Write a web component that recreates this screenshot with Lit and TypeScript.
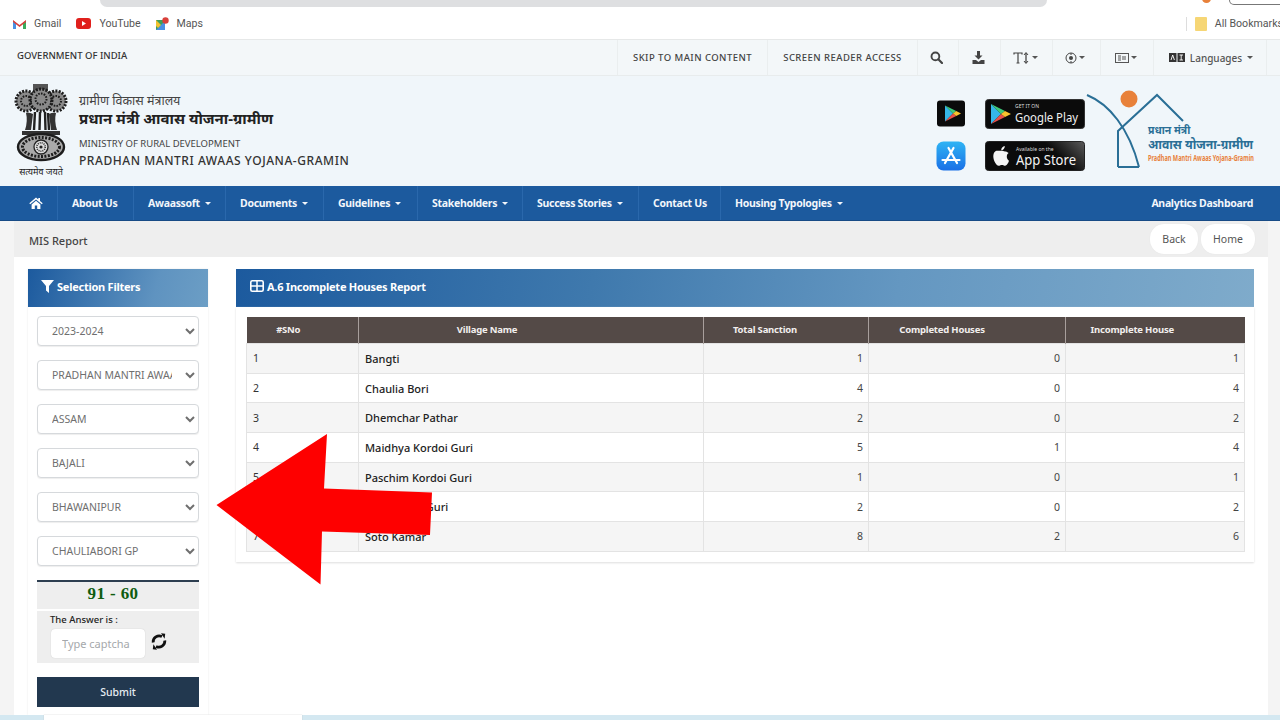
import { LitElement, html, css, svg } from "lit";
import { customElement } from "lit/decorators.js";

const caret = html`<span class="caret"></span>`;

const emblem = svg`<svg width="54" height="82" viewBox="0 0 54 82">
  <path d="M19 1 h15 v7 h-15 z" fill="#555"/>
  <g fill="#8a8a8a" stroke="#1d1d1d" stroke-width="3" stroke-dasharray="2 1.3">
    <circle cx="12" cy="18" r="10"/>
    <circle cx="42" cy="18" r="10"/>
    <ellipse cx="27" cy="17" rx="11" ry="11"/>
  </g>
  <g fill="none" stroke="#1d1d1d" stroke-dasharray="1.6 1.2" stroke-width="2">
    <circle cx="12" cy="18" r="5"/><circle cx="42" cy="18" r="5"/><circle cx="27" cy="16" r="5.5"/>
  </g>
  <path d="M12 30 Q15 29 19 31 L17 47 H11 Q14 38 12 30 Z M42 30 Q39 29 35 31 L37 47 H43 Q40 38 42 30 Z" fill="#333"/>
  <path d="M21 29 L20 47 M26 29 L25.5 47 M31 29 L31.5 47 M34 30 L35 47" stroke="#222" stroke-width="2.4" fill="none"/>
  <path d="M8 48 H46 V52 H8 Z" fill="#333"/>
  <ellipse cx="27" cy="64" rx="23" ry="13" fill="#aaa" stroke="#1d1d1d" stroke-width="2.4"/>
  <ellipse cx="27" cy="64" rx="18.5" ry="9.5" fill="none" stroke="#1d1d1d" stroke-width="3" stroke-dasharray="2 1.4"/>
  <circle cx="27" cy="64" r="7" fill="#ddd" stroke="#222" stroke-width="1.3"/>
  <circle cx="27" cy="64" r="4.2" fill="none" stroke="#333" stroke-width="1.6" stroke-dasharray="1 1"/>
  <circle cx="27" cy="64" r="1.6" fill="#222"/>
</svg>`;

const playTriangle = (x: number, y: number, s: number) => svg`
  <g transform="translate(${x} ${y}) scale(${s})">
    <path d="M0 0 L10 10 L0 20 Z" fill="#35b6e8"/>
    <path d="M0 0 L14 7 L10 10 Z" fill="#3ec97a"/>
    <path d="M0 20 L14 13 L10 10 Z" fill="#e8504a"/>
    <path d="M14 7 L20 10 L14 13 L10 10 Z" fill="#f9c22e"/>
  </g>`;

const apple = (x: number, y: number, s: number) => svg`
  <g transform="translate(${x} ${y}) scale(${s})" fill="#f4f4f4">
    <path d="M12 6 C9.5 4.6 7.5 5.3 6.5 5.3 C5 5.3 2.8 4.4 1.2 7 C-0.6 10 0.5 15.5 3.4 19 C4.6 20.4 5.8 20.6 7 20 C8.3 19.4 9.5 19.4 10.8 20 C12 20.6 13.2 20 14.2 18.7 C15.2 17.4 15.7 16.3 16 15.2 C13.4 14 13 9 15.6 7.6 C14.7 6.6 13.4 6 12 6 Z"/>
    <path d="M8.2 4.8 C8 2.6 9.8 0.6 11.8 0.4 C12 2.6 10.2 4.7 8.2 4.8 Z"/>
  </g>`;

const playIcon = svg`<svg width="30" height="27" viewBox="0 0 30 27">
  <rect x="1" y="0.5" width="28" height="26" rx="3" fill="#0b0b0b"/>
  ${playTriangle(9, 5.5, 0.8)}
</svg>`;

const appIcon = svg`<svg width="30" height="30" viewBox="0 0 30 30">
  <defs><linearGradient id="ap" x1="0" y1="0" x2="0" y2="1"><stop offset="0" stop-color="#2fb4f4"/><stop offset="1" stop-color="#1a70e6"/></linearGradient></defs>
  <rect x="0.5" y="0.5" width="29" height="29" rx="7" fill="url(#ap)"/>
  <g stroke="#fff" stroke-width="2.2" stroke-linecap="round" fill="none">
    <path d="M17.5 7 L9 22"/><path d="M12.5 7 L21 22"/><path d="M6.5 19 H23.5"/>
  </g>
</svg>`;

const googleBadge = svg`<svg class="pm" width="100" height="30" viewBox="0 0 100 30">
  <rect x="0.5" y="0.5" width="99" height="29" rx="3" fill="#0b0b0b" stroke="#333"/>
  ${playTriangle(6, 5, 1)}
  <text x="30" y="9" font-size="5" fill="#ddd" class="bd">GET IT ON</text>
  <text x="30" y="23" font-size="12.5" fill="#f0f0f0" class="bd" textLength="63" lengthAdjust="spacingAndGlyphs">Google Play</text>
</svg>`;

const appleBadge = svg`<svg class="pm" width="100" height="30" viewBox="0 0 100 30">
  <defs><linearGradient id="sh" x1="0" y1="0.3" x2="1" y2="0"><stop offset="0.62" stop-color="#0b0b0b"/><stop offset="1" stop-color="#5a5a5a"/></linearGradient></defs>
  <rect x="0.5" y="0.5" width="99" height="29" rx="3" fill="url(#sh)" stroke="#222"/>
  ${apple(8, 4.5, 1)}
  <text x="31" y="9.5" font-size="5" fill="#ddd" class="bd">Available on the</text>
  <text x="31" y="24" font-size="13.5" fill="#f4f4f4" class="bd" textLength="60" lengthAdjust="spacingAndGlyphs">App Store</text>
</svg>`;

const pmayLogo = svg`<svg class="pm" width="170" height="80" viewBox="0 0 170 80">
  <circle cx="42" cy="9" r="8.5" fill="#e8813a"/>
  <g fill="none" stroke="#2a6f96" stroke-width="2">
    <path d="M0 5 C22 14 42 38 52 77"/>
    <path d="M31 77 H52"/>
    <path d="M31 77 V41 L70 5 L96 31"/>
  </g>
  <text x="61" y="44" font-size="10.5" fill="#2a6f96" class="dv">प्रधान मंत्री</text>
  <text x="61" y="59" font-size="12.5" fill="#2a6f96" class="dv" textLength="105" lengthAdjust="spacingAndGlyphs">आवास योजना-ग्रामीण</text>
  <text x="61" y="71" font-size="8" fill="#e8813a" class="bd" font-weight="700" textLength="106" lengthAdjust="spacingAndGlyphs">Pradhan Mantri Awaas Yojana-Gramin</text>
</svg>`;

const ic = {
  search: svg`<svg width="13" height="13" viewBox="0 0 13 13"><circle cx="5.4" cy="5.4" r="3.9" fill="none" stroke="#444" stroke-width="1.9"/><path d="M8.3 8.3 L12 12" stroke="#444" stroke-width="2.2" stroke-linecap="round"/></svg>`,
  download: svg`<svg width="13" height="13" viewBox="0 0 13 13" fill="#444"><path d="M5 0 H8 V4.5 H10.5 L6.5 8.5 L2.5 4.5 H5 Z"/><path d="M0.5 9 H4 L6.5 11 L9 9 H12.5 V13 H0.5 Z"/></svg>`,
  text: svg`<svg width="17" height="12" viewBox="0 0 17 12" fill="none" stroke="#444"><path d="M1 2.5 V1 H9 V2.5 M5 1 V11 M3.5 11 H6.5" stroke-width="1.2"/><path d="M13 1 V11" stroke-width="1.3"/><path d="M11 3 L13 0.5 L15 3 M11 9 L13 11.5 L15 9" stroke-width="1"/></svg>`,
  contrast: svg`<svg width="12" height="12" viewBox="0 0 12 12" fill="none" stroke="#444"><circle cx="6" cy="6" r="5" stroke-width="1"/><circle cx="6" cy="6" r="2" fill="#444" stroke="none"/><path d="M6 1 V3 M6 9 V11" stroke-width="1"/></svg>`,
  sitemap: svg`<svg width="14" height="10" viewBox="0 0 14 10" fill="none" stroke="#555"><rect x="0.5" y="0.5" width="13" height="9" stroke-width="1"/><path d="M3 3 H6 M3 5 H6 M3 7 H6 M8 3 V7 M10 3 V7" stroke-width="1"/></svg>`,
  lang: svg`<svg width="16" height="9" viewBox="0 0 16 9"><rect x="0" y="0" width="7.5" height="9" fill="#333"/><rect x="8.5" y="0" width="7.5" height="9" fill="#333"/><path d="M2 7 L3.7 2 L5.4 7 M10.5 2 H14 M12.2 2 V7 M10.5 7 H14" fill="none" stroke="#fff" stroke-width="0.9"/></svg>`,
  home: svg`<svg width="14" height="12" viewBox="0 0 14 12" fill="#fff"><path d="M7 0.5 L0.3 6.3 L1.2 7.3 L7 2.4 L12.8 7.3 L13.7 6.3 L11 4 V1 H9.3 V2.5 Z"/><path d="M2.6 7.4 L7 3.7 L11.4 7.4 V12 H8.2 V8.5 H5.8 V12 H2.6 Z"/></svg>`,
  filter: svg`<svg width="13" height="13" viewBox="0 0 13 13" fill="#fff"><path d="M0 0 H13 L8 6 V13 L5 10.5 V6 Z"/></svg>`,
  table: svg`<svg width="14" height="12" viewBox="0 0 14 12"><rect x="0.8" y="0.8" width="12.4" height="10.4" rx="1.5" fill="none" stroke="#fff" stroke-width="1.6"/><path d="M1 6 H13 M7 1 V11" stroke="#fff" stroke-width="1.5"/></svg>`,
  refresh: svg`<svg class="rf" width="16" height="17" viewBox="0 0 16 17" fill="none" stroke="#111" stroke-width="2.8"><path d="M2.2 9.5 A6 6 0 0 1 11 3.6"/><path d="M13.8 7.5 A6 6 0 0 1 5 13.4"/><path d="M10 0.3 L14.2 0.8 L13.6 5.8 Z" fill="#111" stroke="none"/><path d="M6 16.7 L1.8 16.2 L2.4 11.2 Z" fill="#111" stroke="none"/></svg>`,
  gmail: svg`<svg width="13" height="10" viewBox="0 0 13 10"><path d="M0 1.5 V10 H3 V4 Z" fill="#4a90e2"/><path d="M13 1.5 V10 H10 V4 Z" fill="#3bab5a"/><path d="M0 1 L6.5 6 L13 1 L13 3 L6.5 8 L0 3 Z" fill="#d9403a"/></svg>`,
  youtube: svg`<svg width="15" height="11" viewBox="0 0 15 11"><rect width="15" height="11" rx="3" fill="#e0201c"/><path d="M6 3 L10 5.5 L6 8 Z" fill="#fff"/></svg>`,
  maps: svg`<svg width="13" height="14" viewBox="0 0 13 14"><path d="M0 3 H9 V13 H0 Z" fill="#3f9e5a"/><path d="M0 13 L9 4 V13 Z" fill="#4a90e2"/><path d="M0 3 L5 8 L2 11 L0 9 Z" fill="#f2c230"/><circle cx="9.5" cy="3.5" r="3.2" fill="#d9403a"/></svg>`,
};

const rows: [string, string, number, number, number][] = [
  ["1", "Bangti", 1, 0, 1],
  ["2", "Chaulia Bori", 4, 0, 4],
  ["3", "Dhemchar Pathar", 2, 0, 2],
  ["4", "Maidhya Kordoi Guri", 5, 1, 4],
  ["5", "Paschim Kordoi Guri", 1, 0, 1],
  ["6", "Pub Kordoi Guri", 2, 0, 2],
  ["7", "Soto Kamar", 8, 2, 6],
];

const navItems: [string, boolean, number][] = [
  ["About Us", false, 76],
  ["Awaassoft", true, 92],
  ["Documents", true, 98],
  ["Guidelines", true, 94],
  ["Stakeholders", true, 105],
  ["Success Stories", true, 116],
  ["Contact Us", false, 82],
  ["Housing Typologies", true, 125],
];

const selects = ["2023-2024", "PRADHAN MANTRI AWAAS YOJANA-G", "ASSAM", "BAJALI", "BHAWANIPUR", "CHAULIABORI GP"];

@customElement("app-root")
export class AppRoot extends LitElement {
  static styles = css`
    :host { display: flex; flex-direction: column; position: relative; width: 1280px; height: 720px; overflow: hidden; background: #fff; font-family: "Noto Sans", "Open Sans", sans-serif; color: #333; }
    svg { display: block; flex: none; }
    .bd { font-family: "Noto Sans", "Open Sans", sans-serif; }
    .dv { font-family: "Noto Sans", "Noto Serif", "Lohit Devanagari", sans-serif; font-weight: 700; }
    .pm { overflow: visible; }

    .chrome { height: 40px; flex: none; background: #fff; display: flex; flex-direction: column; border-bottom: 1px solid #e6e8e8; box-sizing: border-box; }
    .omni-row { height: 7px; display: flex; justify-content: space-between; flex: none; overflow: hidden; }
    .omni { margin-left: 100px; width: 947px; height: 7px; background: #dedfe1; border-radius: 0 0 12px 12px; }
    .omni-right { display: flex; gap: 18px; margin-right: -15px; }
    .dot { width: 9px; height: 9px; border-radius: 50%; background: #e8813a; margin-top: -6px; }
    .pill { width: 64px; height: 4px; border: 1.5px solid #777; border-top: none; border-radius: 0 0 12px 12px; }
    .marks { flex: 1; display: flex; align-items: center; padding: 0 0 0 13px; font: 10.6px Roboto, sans-serif; color: #555; margin-top: 1px; }
    .mark { display: flex; align-items: center; gap: 8px; margin-right: 15px; }
    .mark.all { margin: 0 0 0 auto; gap: 8px; white-space: nowrap; padding-left: 8px; border-left: 1px solid #ddd; margin-right: -3px; }
    .folder { width: 12px; height: 14px; background: #f6d675; border-radius: 1px; }

    .topbar { height: 36px; flex: none; background: #f3f7f9; display: flex; align-items: center; justify-content: space-between; padding: 0 13px 0 17px; border-bottom: 1px solid #e8eced; box-sizing: border-box; }
    .gov { font-size: 9.5px; font-weight: 500; color: #333; margin-top: -5px; }
    .tools { display: flex; height: 100%; }
    .tool { display: flex; align-items: center; justify-content: center; gap: 2px; border-left: 1px solid #eaeeef; font-size: 9.5px; font-weight: 500; color: #444; box-sizing: border-box; letter-spacing: .45px; }
    .tool.ico { padding-right: 3px; }
    .tool.end { border-right: 1px solid #eaeeef; letter-spacing: 0; padding-left: 2px; }
    .tool .lang { font-size: 10px; font-weight: 500; color: #555; margin-left: 3px; }
    .tcaret { width: 0; height: 0; border: 3px solid transparent; border-top-color: #555; border-bottom: 0; }

    .head { height: 110px; flex: none; background: #f0f6fa; display: flex; align-items: center; padding-left: 14px; box-sizing: border-box; }
    .emblem { width: 54px; display: flex; flex-direction: column; align-items: center; gap: 1px; margin: -2px 11px 0 0; }
    .emblem span { font-size: 9px; color: #222; white-space: nowrap; line-height: 11px; }
    .titles { display: flex; flex-direction: column; color: #333; }
    .t1 { font-size: 12.5px; line-height: 15px; color: #444; }
    .t2 { font-size: 15px; line-height: 21px; font-weight: 700; color: #222; }
    .t3 { font-size: 9.5px; line-height: 14px; color: #444; margin-top: 8px; }
    .t4 { font-size: 12px; line-height: 18px; font-weight: 500; color: #333; letter-spacing: .55px; margin-top: 1px; }
    .stores { margin-left: auto; display: grid; grid-template-columns: 30px 100px; column-gap: 19px; row-gap: 12px; align-items: center; margin-top: 7px; }
    .logo { margin: -3px 23px 0 2px; }

    .nav { height: 35px; flex: none; background: #1c5a9e; border-bottom: 1px solid #174a85; box-sizing: border-box; display: flex; align-items: stretch; padding-left: 15px; padding-right: 27px; color: #f2f6fb; font-size: 10.5px; font-weight: 700; letter-spacing: -.3px; }
    .nav a { display: flex; align-items: center; gap: 5px; padding-left: 14px; border-left: 1px solid #2a68ac; box-sizing: border-box; white-space: nowrap; }
    .nav a.home { border: none; width: 42px; padding-left: 14px; }
    .nav a.right { margin-left: auto; border: none; padding: 0; }
    .caret { width: 0; height: 0; border: 3px solid transparent; border-top-color: #f2f6fb; border-bottom: 0; }

    .content { flex: 1; min-height: 0; display: flex; flex-direction: column; background: #f4f4f4; padding: 0 12px 0 14px; }
    .crumb { height: 36px; flex: none; background: #eeeeee; display: flex; align-items: center; justify-content: space-between; padding: 0 13px 0 15px; font-size: 11px; font-weight: 500; color: #444; }
    .crumb > span { margin-top: 2px; }
    .btns { display: flex; gap: 3px; }
    .btn { height: 30px; width: 48px; display: flex; align-items: center; justify-content: center; background: #fff; border-radius: 14px; font-size: 10.5px; font-weight: 400; color: #555; box-shadow: 0 0 1px #ddd; }
    .btn.h { width: 54px; }

    .body { flex: 1; display: flex; padding: 12px 14px 0 14px; gap: 28px; background: #fff; min-height: 0; }
    .side { width: 180px; flex: none; display: flex; flex-direction: column; box-shadow: 0 0 2px #e8e8e8; align-self: flex-start; height: 446px; }
    .phead { height: 38px; flex: none; display: flex; align-items: center; gap: 3px; color: #fff; font-size: 11px; font-weight: 700; letter-spacing: -.25px; box-sizing: border-box; padding-bottom: 3px; }
    .phead svg { margin-top: -1px; }
    .side .phead { background: linear-gradient(105deg, #1c5a9e, #5f93c0 70%, #6c9ec5); padding-left: 13px; }
    .main { flex: 1; display: flex; flex-direction: column; min-width: 0; }
    .main .phead { background: linear-gradient(100deg, #1c5a9e, #3f79ad 35%, #6497c1 65%, #7fabcb); padding-left: 14px; }
    .filters { display: flex; flex-direction: column; padding: 9px 9px 0; gap: 14px; }
    select { height: 30px; width: 100%; box-sizing: border-box; background-color: #fff; border: 1px solid #d6d9dc; border-radius: 4px; padding: 0 10px; font: 10.5px "Noto Sans", sans-serif; color: #6f6f6f; box-shadow: 0 1px 1px #eee; }
    .cap { margin: 14px 9px 0; display: flex; flex-direction: column; }
    .cap-top { height: 29px; background: #eee; border-top: 2px solid #2d3e50; box-sizing: border-box; display: flex; align-items: center; justify-content: center; padding: 0 10px 3px 0; font: 700 17px "Liberation Serif", serif; color: #0f5c0f; letter-spacing: .4px; }
    .cap-bot { margin-top: 2px; height: 52px; background: #eee; padding: 2px 14px 0; box-sizing: border-box; display: flex; flex-direction: column; }
    .cap-lbl { font-size: 9.5px; font-weight: 500; color: #222; line-height: 14px; margin-left: -1px; }
    .cap-row { display: flex; align-items: center; gap: 6px; margin-top: 2px; }
    .rf { margin-top: -4px; }
    input { width: 94px; height: 29px; box-sizing: border-box; border: none; border-radius: 4px; background: #fff; padding: 0 11px; font: 11px "Noto Sans", sans-serif; box-shadow: 0 0 1px #bbb; }
    input::placeholder { color: #a5a8ab; opacity: 1; }
    .submit { margin: 14px 9px 0; height: 30px; background: #22384f; color: #e6ecf2; display: flex; align-items: center; justify-content: center; font-size: 10.5px; font-weight: 500; }

    .card { padding: 10px; box-shadow: 0 1px 2px #ddd; background: #fff; }
    table { width: 998px; border-collapse: collapse; table-layout: fixed; font-size: 10.5px; color: #333; }
    th { height: 24px; background: #544a47; color: #f2efee; font-size: 9.5px; font-weight: 700; letter-spacing: -.2px; border-right: 1px solid #a89f9c; padding: 0 0 2px; }
    th:nth-child(1) { padding-right: 28px; }
    th:nth-child(2) { padding-right: 88px; }
    th:nth-child(3) { padding-right: 42px; }
    th:nth-child(4) { padding-right: 50px; }
    th:nth-child(5) { padding-right: 46px; border-right: none; }
    td { height: 29.7px; box-sizing: border-box; border: 1px solid #e3e3e3; padding: 0 5px 0 6px; }
    tr:nth-child(odd) td { background: #f5f5f5; }
    td.name { font-size: 11px; font-weight: 500; color: #222; }
    td.num { text-align: right; color: #444; }

    .foot { height: 5px; flex: none; background: #d4e8f1; display: flex; padding-left: 44px; }
    .foot i { display: block; width: 258px; background: #fff; box-shadow: 0 0 1px #bbb; }

    .arrow { position: absolute; left: 216px; top: 434px; }
  `;

  render() {
    const toolDefs: [any, number, boolean][] = [
      [ic.search, 41, false], [ic.download, 42, false], [ic.text, 52, true], [ic.contrast, 48, true], [ic.sitemap, 53, true],
    ];
    return html`
      <div class="chrome">
        <div class="omni-row"><div class="omni"></div><div class="omni-right"><div class="dot"></div><div class="pill"></div></div></div>
        <div class="marks">
          <div class="mark">${ic.gmail}<span>Gmail</span></div>
          <div class="mark">${ic.youtube}<span>YouTube</span></div>
          <div class="mark">${ic.maps}<span>Maps</span></div>
          <div class="mark all"><span class="folder"></span><span>All Bookmarks</span></div>
        </div>
      </div>
      <div class="topbar">
        <div class="gov">GOVERNMENT OF INDIA</div>
        <div class="tools">
          <div class="tool" style="width:150px">SKIP TO MAIN CONTENT</div>
          <div class="tool" style="width:150px">SCREEN READER ACCESS</div>
          ${toolDefs.map(([i, w, c]) => html`<div class="tool ico" style="width:${w}px">${i}${c ? html`<span class="tcaret"></span>` : ""}</div>`)}
          <div class="tool end" style="width:114px">${ic.lang}<span class="lang">Languages</span><span class="tcaret" style="margin-left:3px"></span></div>
        </div>
      </div>
      <div class="head">
        <div class="emblem">${emblem}<span>सत्यमेव जयते</span></div>
        <div class="titles">
          <div class="t1">ग्रामीण विकास मंत्रालय</div>
          <div class="t2">प्रधान मंत्री आवास योजना-ग्रामीण</div>
          <div class="t3">MINISTRY OF RURAL DEVELOPMENT</div>
          <div class="t4">PRADHAN MANTRI AWAAS YOJANA-GRAMIN</div>
        </div>
        <div class="stores">${playIcon}${googleBadge}${appIcon}${appleBadge}</div>
        <div class="logo">${pmayLogo}</div>
      </div>
      <div class="nav">
        <a class="home">${ic.home}</a>
        ${navItems.map(([t, c, w]) => html`<a style="width:${w}px">${t}${c ? caret : ""}</a>`)}
        <a class="right">Analytics Dashboard</a>
      </div>
      <div class="content">
        <div class="crumb"><span>MIS Report</span><div class="btns"><div class="btn">Back</div><div class="btn h">Home</div></div></div>
        <div class="body">
          <div class="side">
            <div class="phead">${ic.filter}<span>Selection Filters</span></div>
            <div class="filters">${selects.map((s) => html`<select><option>${s}</option></select>`)}</div>
            <div class="cap">
              <div class="cap-top">91 - 60</div>
              <div class="cap-bot">
                <div class="cap-lbl">The Answer is :</div>
                <div class="cap-row"><input placeholder="Type captcha" />${ic.refresh}</div>
              </div>
            </div>
            <div class="submit">Submit</div>
          </div>
          <div class="main">
            <div class="phead">${ic.table}<span>A.6 Incomplete Houses Report</span></div>
            <div class="card">
              <table>
                <colgroup><col style="width:112px"/><col style="width:345px"/><col style="width:165px"/><col style="width:197px"/><col style="width:179px"/></colgroup>
                <thead><tr><th>#SNo</th><th>Village Name</th><th>Total Sanction</th><th>Completed Houses</th><th>Incomplete House</th></tr></thead>
                <tbody>${rows.map((r) => html`<tr><td>${r[0]}</td><td class="name">${r[1]}</td><td class="num">${r[2]}</td><td class="num">${r[3]}</td><td class="num">${r[4]}</td></tr>`)}</tbody>
              </table>
            </div>
          </div>
        </div>
      </div>
      <div class="foot"><i></i></div>
      <svg class="arrow" width="218" height="152" viewBox="216 434 218 152"><path d="M216.5 505 L327 434 L324 488.5 L432 492.5 L430 535 L322 531.5 L320.5 584.5 Z" fill="#fe0000"/></svg>
    `;
  }
}
